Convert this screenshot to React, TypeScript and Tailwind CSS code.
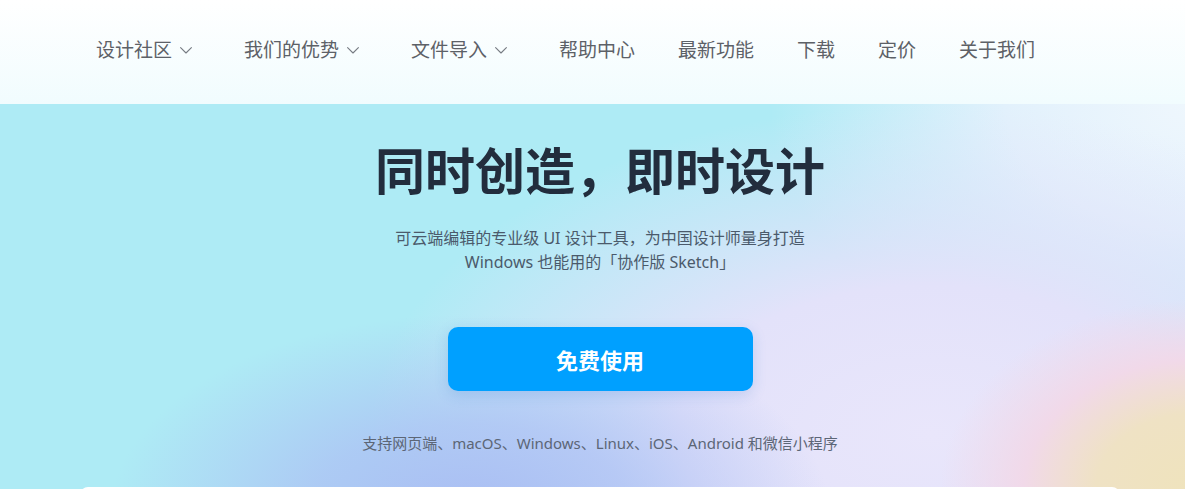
import React from "react";

const Chevron = () => (
  <svg width="12" height="7" viewBox="0 0 12 7" fill="none" className="ml-[8px] mr-[9px] mt-[1px]">
    <polyline points="0.6,0.6 6,6 11.4,0.6" stroke="#767b82" strokeWidth="1.1" fill="none" strokeLinejoin="round" strokeLinecap="round" />
  </svg>
);

const navItems: { label: string; dropdown?: boolean }[] = [
  { label: "设计社区", dropdown: true },
  { label: "我们的优势", dropdown: true },
  { label: "文件导入", dropdown: true },
  { label: "帮助中心" },
  { label: "最新功能" },
  { label: "下载" },
  { label: "定价" },
  { label: "关于我们" },
];

export default function App() {
  return (
    <div
      className="w-full h-[489px] overflow-hidden bg-white"
      style={{ fontFamily: '"Noto Sans", "Noto Sans CJK SC", sans-serif' }}
    >
      <div className="w-[1200px]">
        {/* Header */}
        <header className="h-[104px] bg-gradient-to-b from-white to-[#f1fcfe] flex items-start pt-[38px] pl-[96px]">
          <nav className="flex items-center gap-[43px]">
            {navItems.map((item) => (
              <div key={item.label} className="flex items-center text-[19px] leading-[24px] text-[#5d6167]">
                <span>{item.label}</span>
                {item.dropdown && <Chevron />}
              </div>
            ))}
          </nav>
        </header>

        {/* Hero */}
        <section className="h-[600px] flex flex-col items-center bg-[#aeebf5] bg-[radial-gradient(ellipse_260px_190px_at_1200px_385px,#efe3bc_0%,#efe2c4_40%,#f1d9e9_68%,rgba(241,217,233,0)_100%),radial-gradient(ellipse_360px_200px_at_470px_410px,#a9bdf3_0%,rgba(172,192,244,0.75)_45%,rgba(172,192,244,0)_100%),radial-gradient(ellipse_560px_330px_at_930px_330px,#e9e6fb_0%,#e3e2fa_45%,rgba(227,226,250,0)_100%),radial-gradient(ellipse_430px_280px_at_1200px_0px,#eff7fd_0%,#e2f1fc_45%,rgba(226,241,252,0)_100%)]">
          <h1 className="mt-[37px] text-[50px] leading-[60px] font-bold text-[#222d3d]">
            同时创造，即时设计
          </h1>
          <p className="mt-[25px] text-[16px] leading-[24px] text-[#4b5a6b] text-center">
            可云端编辑的专业级 UI 设计工具，为中国设计师量身打造
            <br />
            Windows 也能用的「协作版 Sketch」
          </p>
          <button className="mt-[53px] w-[305px] h-[64px] rounded-[10px] bg-[#00a0ff] text-white text-[22px] leading-[30px] font-bold pt-[2px] shadow-[0_4px_14px_rgba(40,110,200,0.18)]">
            免费使用
          </button>
          <p className="mt-[42px] text-[15px] leading-[20px] text-[#5c6676]">
            支持网页端、macOS、Windows、Linux、iOS、Android 和微信小程序
          </p>
          <div className="mt-[34px] w-[1040px] h-[200px] rounded-t-[8px] bg-white" />
        </section>
      </div>
    </div>
  );
}
